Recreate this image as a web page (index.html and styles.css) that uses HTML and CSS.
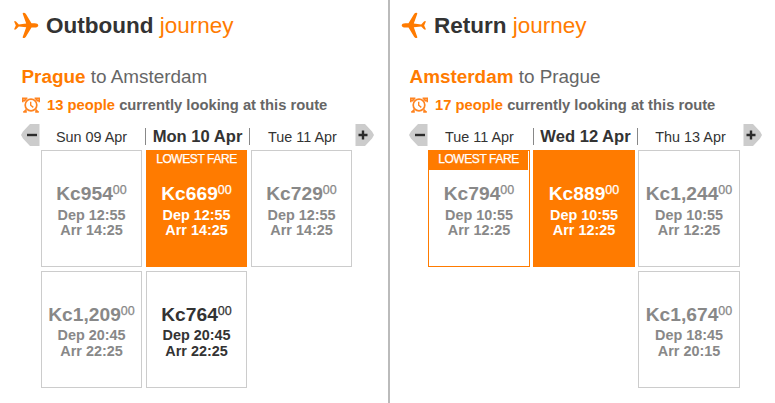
FILE: index.html
```html
<!DOCTYPE html>
<html lang="en">
<head>
<meta charset="utf-8">
<title>Choose your flights</title>
<link rel="stylesheet" href="styles.css">
</head>
<body>
<svg class="defs" width="0" height="0" aria-hidden="true">
  <symbol id="plane" viewBox="0 0 26 26">
    <path d="M25.300 13.400c0-1.200-1.600-2.100-3.600-2.100h-3.200L12.900 2Q12 .7 10.800.7c-1 0-1.300.5-1 1.400l3.400 9.400-7.400.9-3-3.200H1l1.800 4.200L1 17.600h1.800l3-3.200 7.400.9-3.400 9.400c-.3.900 0 1.400 1 1.400q1.200 0 2.100-1.300l5.600-9.300h3.200c2 0 3.600-.9 3.600-2.100z" fill="#ff7b00"/>
  </symbol>
  <symbol id="clock" viewBox="0 0 18 16">
    <g fill="none" stroke="#ff8420" stroke-width="1.700">
      <circle cx="9" cy="8" r="5.800"/>
      <path d="M.8 5.200V1.300h4.600M17.200 5.200V1.300h-4.600M1.200 14.900h3.600M16.800 14.900h-3.600M4.400 12.600l-2 2M13.600 12.600l2 2M1.800 4.200l2.400-2M16.200 4.200l-2.400-2"/>
      <path d="M8.700 4.800v3.400l2.600 2.200" stroke-width="1.400"/>
    </g>
  </symbol>
</svg>
<main class="journeys">
  <section class="journey outbound">
    <h1 class="title"><svg class="plane"><use href="#plane"/></svg><span><b>Outbound</b> journey</span></h1>
    <h2 class="route"><b>Prague</b> to Amsterdam</h2>
    <p class="viewers"><svg class="clock"><use href="#clock"/></svg><span><b>13 people</b> currently looking at this route</span></p>
    <div class="dates">
      <svg class="arrow" viewBox="0 0 20 22"><path d="M19.500 0v22H10L3 14.500 1 11l2-3.500L10 0z" fill="#ccc"/><path d="M7 11h10" stroke="#2b2b2b" stroke-width="2.400"/></svg>
      <span class="date">Sun 09 Apr</span>
      <span class="date current">Mon 10 Apr</span>
      <span class="date">Tue 11 Apr</span>
      <svg class="arrow next" viewBox="0 0 20 22"><path d="M.5 0v22H10l7-7.500 2-3.500-2-3.500L10 0z" fill="#ccc"/><path d="M3.500 11h9M8 6.500v9" stroke="#2b2b2b" stroke-width="2.400"/></svg>
    </div>
    <div class="fares">
      <article class="fare"><p class="price">Kc954<sup>00</sup></p><p class="time">Dep 12:55</p><p class="time">Arr 14:25</p></article>
      <article class="fare selected"><span class="tag">LOWEST FARE</span><p class="price">Kc669<sup>00</sup></p><p class="time">Dep 12:55</p><p class="time">Arr 14:25</p></article>
      <article class="fare"><p class="price">Kc729<sup>00</sup></p><p class="time">Dep 12:55</p><p class="time">Arr 14:25</p></article>
      <article class="fare later"><p class="price">Kc1,209<sup>00</sup></p><p class="time">Dep 20:45</p><p class="time">Arr 22:25</p></article>
      <article class="fare later available"><p class="price">Kc764<sup>00</sup></p><p class="time">Dep 20:45</p><p class="time">Arr 22:25</p></article>
    </div>
  </section>
  <section class="journey return">
    <h1 class="title"><svg class="plane"><use href="#plane"/></svg><span><b>Return</b> journey</span></h1>
    <h2 class="route"><b>Amsterdam</b> to Prague</h2>
    <p class="viewers"><svg class="clock"><use href="#clock"/></svg><span><b>17 people</b> currently looking at this route</span></p>
    <div class="dates">
      <svg class="arrow" viewBox="0 0 20 22"><path d="M19.500 0v22H10L3 14.500 1 11l2-3.500L10 0z" fill="#ccc"/><path d="M7 11h10" stroke="#2b2b2b" stroke-width="2.400"/></svg>
      <span class="date">Tue 11 Apr</span>
      <span class="date current">Wed 12 Apr</span>
      <span class="date">Thu 13 Apr</span>
      <svg class="arrow next" viewBox="0 0 20 22"><path d="M.5 0v22H10l7-7.500 2-3.500-2-3.500L10 0z" fill="#ccc"/><path d="M3.500 11h9M8 6.500v9" stroke="#2b2b2b" stroke-width="2.400"/></svg>
    </div>
    <div class="fares">
      <article class="fare lowest"><span class="tag">LOWEST FARE</span><p class="price">Kc794<sup>00</sup></p><p class="time">Dep 10:55</p><p class="time">Arr 12:25</p></article>
      <article class="fare selected"><p class="price">Kc889<sup>00</sup></p><p class="time">Dep 10:55</p><p class="time">Arr 12:25</p></article>
      <article class="fare"><p class="price">Kc1,244<sup>00</sup></p><p class="time">Dep 10:55</p><p class="time">Arr 12:25</p></article>
      <article class="fare later last"><p class="price">Kc1,674<sup>00</sup></p><p class="time">Dep 18:45</p><p class="time">Arr 20:15</p></article>
    </div>
  </section>
</main>
</body>
</html>
```
FILE: styles.css
```css
* { box-sizing: border-box; }
body { margin: 0; background: #fff; color: #333; font-family: "Liberation Sans", Arial, sans-serif; overflow: hidden; }
h1, h2, p { margin: 0; font-weight: normal; }
.defs { display: block; position: absolute; }
.journeys { display: grid; grid-template-columns: 390px 385px; height: 403px; }
.outbound { border-right: 2px solid #bbb; }
.title { display: flex; align-items: center; gap: 7px; height: 26px; margin: 12px 0 0 13px; font-size: 22.5px; color: #ff7b00; white-space: nowrap; }
.title span { padding-top: 1px; }
.title b { color: #333; }
.plane { width: 26px; height: 26px; flex: none; }
.return .title { margin-left: 11px; }
.return .plane { transform: scaleX(-1); }
.route { height: 24px; margin: 27px 0 0 21.5px; font-size: 18.9px; line-height: 24px; color: #666; }
.return .route { margin-left: 19.5px; }
.route b, .viewers b { color: #ff7b00; }
.viewers { display: flex; align-items: center; gap: 7px; height: 18px; margin: 7px 0 0 22px; font-size: 14.75px; font-weight: bold; color: #666; white-space: nowrap; }
.return .viewers { margin-left: 20px; }
.clock { width: 18px; height: 16px; flex: none; }
.dates { display: grid; grid-template-columns: 20px 105px 105px 105px 20px; height: 22px; margin: 10px 0 0 20px; }
.return .dates { margin-left: 18px; }
.arrow { width: 20px; height: 22px; }
.next { justify-self: end; }
.date { height: 17px; margin: 4px 0 0; font-size: 14.4px; line-height: 19px; text-align: center; white-space: nowrap; }
.date:first-of-type { padding-right: 2px; }
.current { font-size: 16.6px; line-height: 17px; font-weight: bold; border: solid #888; border-width: 0 1px; }
.fares { display: grid; grid-template-columns: repeat(3, 101px); grid-auto-rows: 117px; gap: 4px; margin: 4px 0 0 41px; }
.return .fares { grid-template-columns: repeat(3, 102px); column-gap: 3px; margin-left: 38px; }
.fare { position: relative; padding-top: 31px; border: 1px solid #ccc; color: #888; text-align: center; white-space: nowrap; }
.last { grid-column: 3; }
.lowest { border-color: #ff7b00; }
.selected { border-color: #ff7b00; background: #ff7b00; color: #fff; }
.available { color: #333; }
.price { height: 26px; font-size: 19.2px; font-weight: bold; line-height: 24px; }
.price sup { font-size: 12.5px; line-height: 0; font-weight: normal; vertical-align: 6px; -webkit-text-stroke: .25px currentColor; }
.time { font-size: 14.4px; font-weight: bold; line-height: 15px; }
.later .price { height: 25px; }
.later .time + .time { margin-top: 1px; }
.tag { position: absolute; top: 0; left: 0; width: 99px; height: 19px; background: #ff7b00; color: #fff; font-size: 12px; letter-spacing: -.4px; line-height: 16px; -webkit-text-stroke: .25px #fff; }
```
